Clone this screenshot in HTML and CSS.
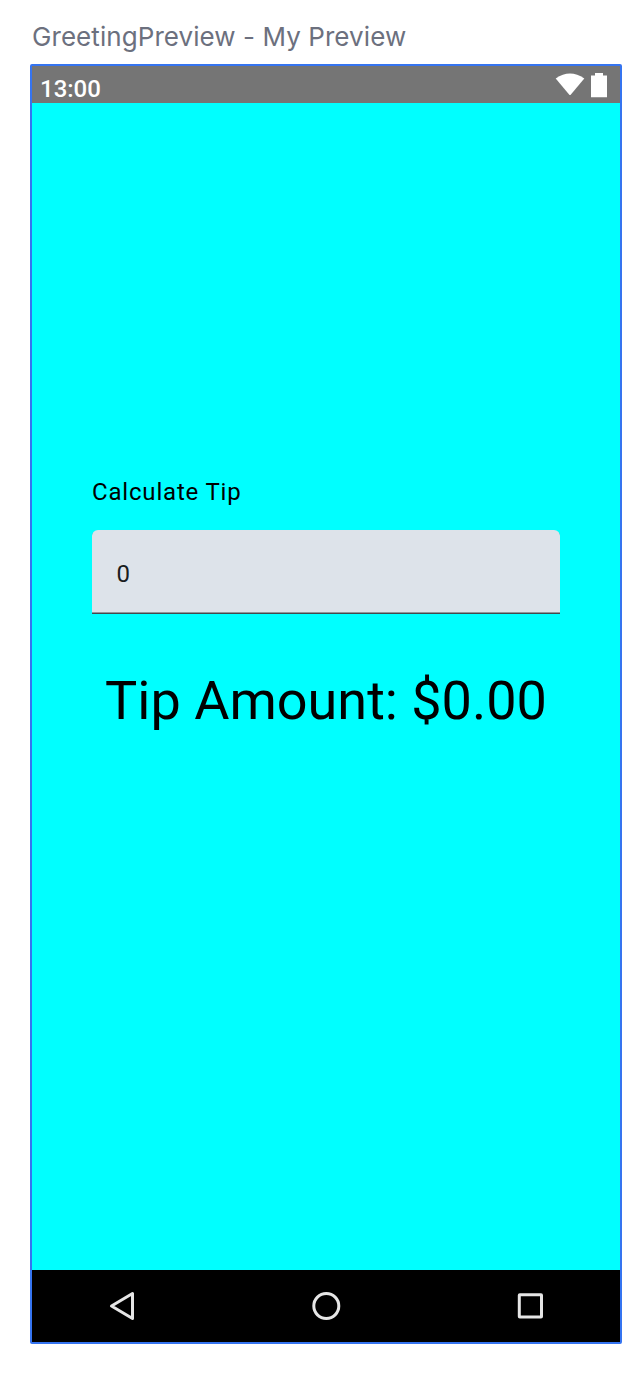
FILE: index.html
```html
<!DOCTYPE html>
<html lang="en">
<head>
<meta charset="utf-8">
<title>GreetingPreview</title>
<link rel="stylesheet" href="styles.css">
</head>
<body>
<div class="preview-title"><span>GreetingPreview - My Preview</span></div>
<div class="device">
  <div class="status-bar">
    <span class="time">13:00</span>
    <svg class="status-icons" width="54" height="28" viewBox="0 0 54 28" fill="#fff"><path d="M.7 7.500Q15-2.500 29.300 7.500L15.900 23.600Q15 24.600 14.100 23.600Z"/><path d="M36 4.500h4V2h8v2.500h4V26.300H36Z"/></svg>
  </div>
  <main class="screen">
    <label class="label" for="amount"><span>Calculate Tip</span></label>
    <div class="field" id="amount"><span>0</span></div>
    <div class="tip"><span>Tip Amount: $0.00</span></div>
  </main>
  <nav class="nav-bar">
    <svg width="36" height="36" viewBox="0 0 36 36"><path d="M7.500 18 28.500 5.500V30.500Z"/></svg>
    <svg width="36" height="36" viewBox="0 0 36 36"><circle cx="18.300" cy="18" r="12.500"/></svg>
    <svg width="36" height="36" viewBox="0 0 36 36"><rect x="7.300" y="6.700" width="22.200" height="22.400" rx="0.500"/></svg>
  </nav>
</div>
</body>
</html>
```
FILE: styles.css
```css
* { box-sizing: border-box; }
body { margin: 0; background: #fff; font-family: Roboto, sans-serif; }
.preview-title {
  height: 64px;
  padding: 21px 0 0 32px;
  font: 26px/32px Inter, sans-serif;
  letter-spacing: .07px;
  color: #6c707e;
  white-space: nowrap;
}
.device {
  display: flex;
  flex-direction: column;
  width: 592px;
  height: 1280px;
  margin-left: 30px;
  border: 2px solid #3574f0;
  border-radius: 2px;
}
.status-bar {
  display: flex;
  justify-content: space-between;
  height: 37px;
  padding: 5px 11px 0 8px;
  background: #757575;
  color: #fff;
}
.time { font-size: 24px; font-weight: 500; line-height: 36px; }
.screen {
  flex: 1;
  padding: 371px 60px 0;
  background: #0ff;
  color: #000;
}
.label { display: block; height: 56px; font-size: 24px; line-height: 36px; letter-spacing: .82px; }
.field {
  height: 84px;
  padding: 26px 24.5px 0;
  background: #dde3ea;
  border-radius: 6px 6px 0 0;
  box-shadow: inset 0 -1px #45484d, inset 0 -2px #919599;
  color: #191c20;
  font-size: 24px;
  line-height: 36px;
}
.tip { margin-top: 51px; font-size: 54px; line-height: 72px; text-align: center; white-space: nowrap; }
.nav-bar {
  display: flex;
  justify-content: space-between;
  height: 72px;
  padding: 18px 72px;
  background: #000;
}
.nav-bar svg { fill: none; stroke: #e6e6e6; stroke-width: 3; stroke-linejoin: round; }
```
